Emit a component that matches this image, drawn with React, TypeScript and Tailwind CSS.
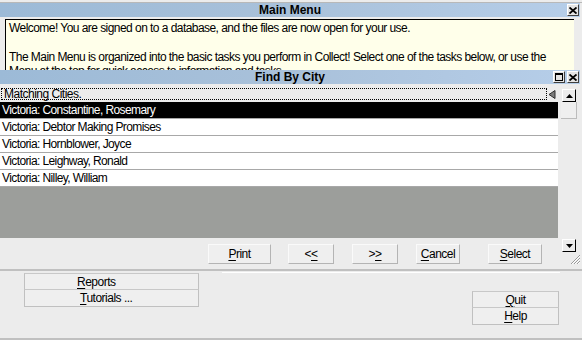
const FONT = "font-['Liberation_Sans',Arial,sans-serif]";

const ROWS = [
  'Victoria: Constantine, Rosemary',
  'Victoria: Debtor Making Promises',
  'Victoria: Hornblower, Joyce',
  'Victoria: Leighway, Ronald',
  'Victoria: Nilley, William',
];

function CloseIcon() {
  return (
    <svg width="8" height="7" viewBox="0 0 8 7" aria-hidden="true">
      <path d="M0.5 0.5 L7.5 6.5 M7.5 0.5 L0.5 6.5" stroke="#000" strokeWidth="1.8" />
    </svg>
  );
}

function BoxButton({ children }: { children: React.ReactNode }) {
  return (
    <div className="flex h-[12px] w-[12px] items-center justify-center border border-t-white border-l-white border-r-[#404040] border-b-[#404040] bg-[#e4e4e4]">
      {children}
    </div>
  );
}

function TitleBar({ title, restore }: { title: string; restore?: boolean }) {
  return (
    <div className="mr-[2px] grid h-[14px] grid-cols-[1fr_auto_1fr] items-center bg-gradient-to-r from-[#9cbad7] via-[#a9c1da] to-[#b6cee9]">
      <div />
      <span className="text-[12px] font-bold leading-none">{title}</span>
      <div className="flex justify-end gap-[2px] pr-[1px]">
        {restore && (
          <BoxButton>
            <div className="h-[8px] w-[8px] border border-t-2 border-black" />
          </BoxButton>
        )}
        <BoxButton>
          <CloseIcon />
        </BoxButton>
      </div>
    </div>
  );
}

function Btn({ label, u, rest, className }: { label?: string; u: string; rest: string; className: string }) {
  return (
    <div
      className={`flex h-[20px] items-center justify-center border border-t-[#fafafa] border-l-[#fafafa] border-r-[#b4b4b4] border-b-[#b4b4b4] bg-[#efefef] text-[12px] tracking-[-0.5px] ${className}`}
    >
      <span>
        {label}
        <span className="underline underline-offset-[2px]">{u}</span>
        {rest}
      </span>
    </div>
  );
}

function ScrollArrow({ up }: { up?: boolean }) {
  return (
    <div className="flex h-[13px] w-[14px] items-center justify-center border border-t-white border-l-white border-r-black border-b-black bg-[#ececec]">
      <svg width="7" height="4" viewBox="0 0 7 4" aria-hidden="true">
        <polygon points={up ? '3.5,0 7,4 0,4' : '0,0 7,0 3.5,4'} fill="#000" />
      </svg>
    </div>
  );
}

function MenuBtn({ u, rest, pad, className = '' }: { u: string; rest: string; pad: string; className?: string }) {
  return (
    <div className={`flex h-[17px] items-center border border-[#c0c0c0] border-t-[#c8c8c8] bg-[#efefef] text-[12px] leading-none tracking-[-0.5px] ${pad} ${className}`}>
      <span>
        <span className="underline underline-offset-[2px]">{u}</span>
        {rest}
      </span>
    </div>
  );
}

export default function App() {
  return (
    <div className={`h-[340px] w-[582px] overflow-hidden bg-[#ececec] text-black ${FONT}`}>
      <div className="h-[3px] border-b border-[#b8b8b8]" />
      <TitleBar title="Main Menu" />
      <div className="h-[2px]" />
      <div className="ml-[5px] mr-[8px] h-[51px] overflow-hidden whitespace-nowrap border-l border-t border-black bg-[#ffffea] pl-[3px] pt-[1px] text-[12px] leading-[14px] tracking-[-0.55px]">
        <p>Welcome! You are signed on to a database, and the files are now open for your use.</p>
        <p className="mt-[15px]">
          The Main Menu is organized into the basic tasks you perform in Collect! Select one of the tasks below, or use the
          <br />
          Menu at the top for quick access to information and tasks.
        </p>
      </div>

      <TitleBar title="Find By City" restore />

      <div className="flex h-[185px]">
        <div className="flex w-[558px] shrink-0 flex-col">
          <div className="mt-[4px] flex h-[12px] items-center">
            <div className="ml-[1px] flex h-[12px] w-[546px] items-center border border-dotted border-black bg-[#ececec] pl-[2px] text-[12px] leading-none tracking-[-0.5px]">
              Matching Cities.
            </div>
            <svg className="ml-[1px]" width="8" height="9" viewBox="0 0 8 9" aria-hidden="true">
              <polygon points="7,0.5 7,8.5 1,4.5" fill="#7c7c7c" stroke="#303030" strokeWidth="1" />
            </svg>
          </div>
          <ul className="mt-[2px] bg-white">
            {ROWS.map((r, i) => (
              <li
                key={r}
                className={`flex h-[17px] items-center border-b border-[#a8a8a8] pl-[2px] text-[12px] leading-none tracking-[-0.6px] ${
                  i === 0 ? 'bg-black text-white' : ''
                }`}
              >
                {r}
              </li>
            ))}
          </ul>
          <div className="h-[51px] bg-[#9c9e9b]" />
          <div className="mt-[6px] flex h-[20px]">
            <Btn u="P" rest="rint" className="ml-[208px] w-[63px]" />
            <Btn label="<" u="<" rest="" className="ml-[17px] w-[46px]" />
            <Btn label=">" u=">" rest="" className="ml-[18px] w-[46px]" />
            <Btn u="C" rest="ancel" className="ml-[18px] w-[44px]" />
            <Btn u="S" rest="elect" className="ml-[28px] w-[54px]" />
          </div>
        </div>

        <div className="flex flex-1 flex-col items-start pl-[4px] pt-[5px]">
          <ScrollArrow up />
          <div className="-ml-[1px] h-[17px] w-[16px] border-b border-r border-[#bcbcbc] bg-[#efefef]" />
          <div className="flex-1" />
          <ScrollArrow />
          <svg className="ml-[8px] mt-[2px]" width="11" height="11" viewBox="0 0 11 11" aria-hidden="true">
            <path d="M10 1 L1 10 M10 4 L4 10 M10 7 L7 10" stroke="#9a9a9a" strokeWidth="1" />
            <path d="M10 2 L2 10 M10 5 L5 10 M10 8 L8 10" stroke="#ffffff" strokeWidth="1" />
          </svg>
          <div className="h-[4px]" />
        </div>
      </div>

      <div className="h-[2px] bg-[#c0c0c0]" />
      <div className="flex h-[67px]">
        <div className="ml-[24px] mt-[2px] flex w-[175px] shrink-0 flex-col">
          <MenuBtn u="R" rest="eports" pad="pl-[52px]" />
          <MenuBtn u="T" rest="utorials ..." pad="pl-[55px]" className="-mt-[1px] h-[18px]" />
        </div>
        <div className="flex flex-1 flex-col pl-[23px] pr-[22px]">
          <div className="mt-[1px] h-[1px] bg-white" />
          <div className="mr-[1px] mt-[18px] flex w-[87px] flex-col self-end">
            <MenuBtn u="Q" rest="uit" pad="justify-center" />
            <MenuBtn u="H" rest="elp" pad="justify-center" className="-mt-[1px] h-[18px]" />
          </div>
        </div>
      </div>
      <div className="h-[2px] bg-[#c0c0c0]" />
    </div>
  );
}
